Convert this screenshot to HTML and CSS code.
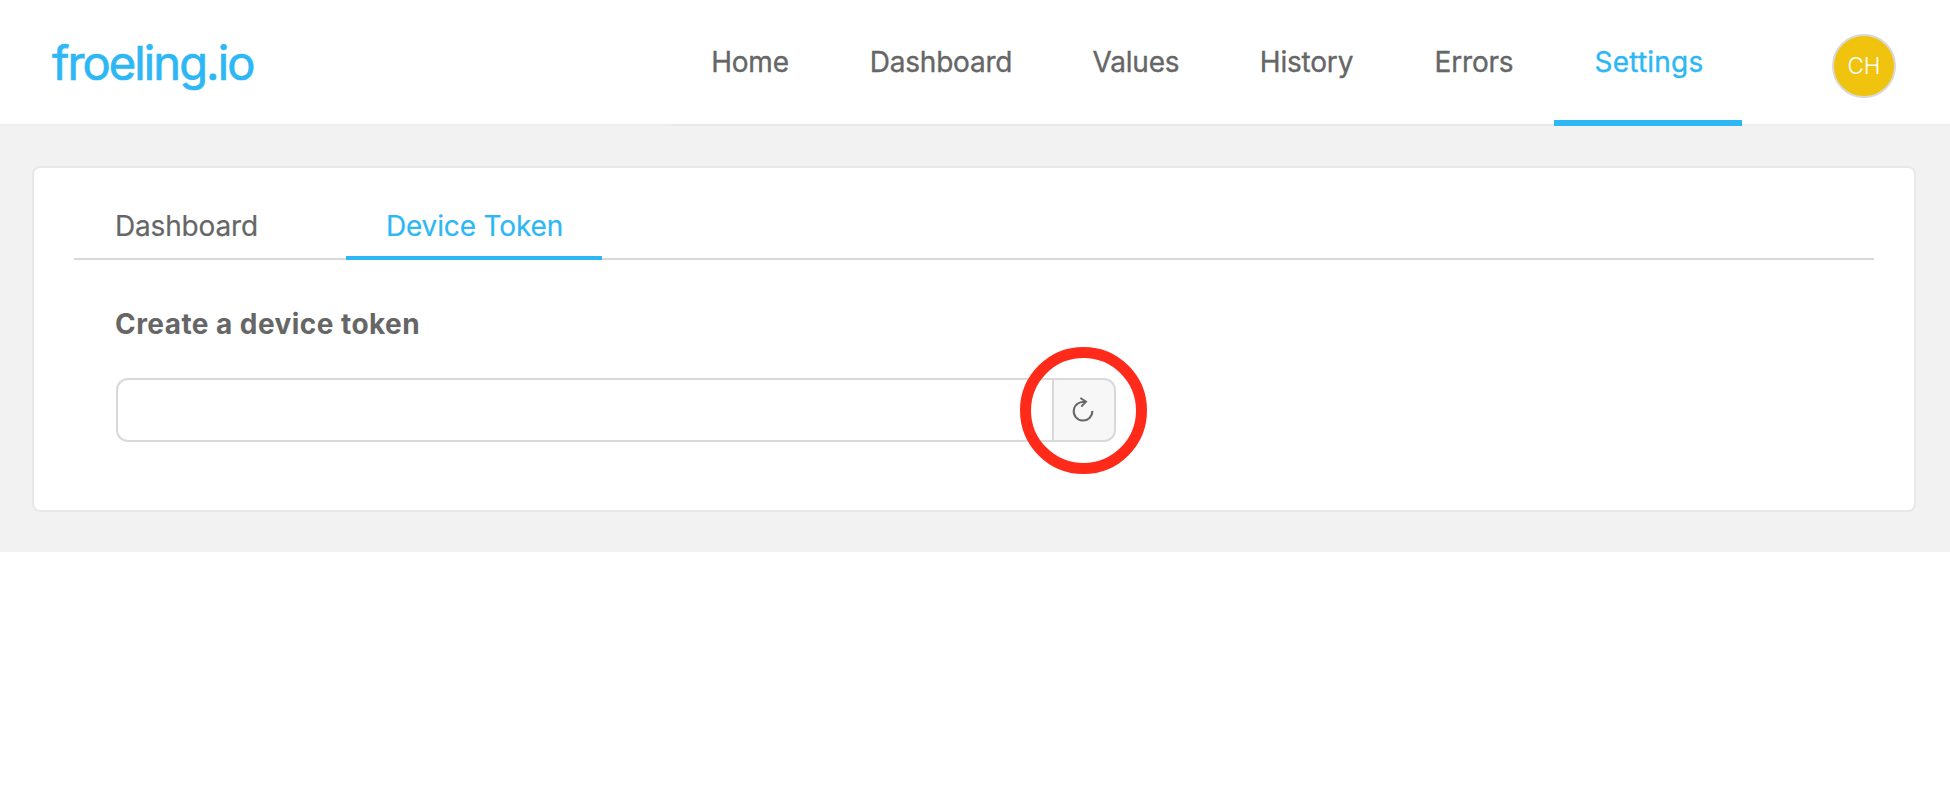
FILE: index.html
```html
<!DOCTYPE html>
<html lang="en">
<head>
<meta charset="utf-8">
<title>froeling.io</title>
<link rel="stylesheet" href="styles.css">
</head>
<body>
<header class="header">
  <a class="logo">froeling.io</a>
  <nav class="nav">
    <a class="nav-item">Home</a>
    <a class="nav-item">Dashboard</a>
    <a class="nav-item">Values</a>
    <a class="nav-item">History</a>
    <a class="nav-item">Errors</a>
    <a class="nav-item nav-active">Settings</a>
  </nav>
  <div class="avatar">CH</div>
</header>
<main class="content">
  <section class="card">
    <div class="tabs">
      <a class="tab">Dashboard</a>
      <a class="tab tab-active">Device Token</a>
    </div>
    <div class="panel">
      <h2 class="title">Create a device token</h2>
      <div class="token">
        <input class="token-input" type="text" aria-label="Device token" readonly>
        <button class="refresh" aria-label="Refresh">
          <svg width="32" height="32" viewBox="0 0 32 32" fill="none" stroke="#666" stroke-width="2"><path d="M24.3 16.9A9.3 9.3 0 1 1 17.4 8.3M12.4 4 18 7.7 13.3 12.6"/></svg>
        </button>
        <span class="marker"></span>
      </div>
    </div>
  </section>
</main>
</body>
</html>
```
FILE: styles.css
```css
* { box-sizing: border-box; }
body { margin: 0; background: #fff; color: #666; font: 400 28px/40px Inter, "Noto Sans", sans-serif; }
.header { display: flex; height: 126px; border-bottom: 2px solid #ededed; }
.logo { width: 671px; padding: 32px 0 0 52px; color: #2db7f5; font-size: 47px; line-height: 62px; letter-spacing: -1.9px; -webkit-text-stroke: 0.7px; }
.nav { display: grid; grid-template-columns: 158px 224px 166px 175px 160px 188px; height: 126px; border-bottom: 2px solid #e8e8e8; }
.nav-item { height: 126px; padding-top: 42px; text-align: center; letter-spacing: -0.2px; -webkit-text-stroke: 0.35px; }
.nav-active { padding-left: 2px; color: #2db7f5; border-bottom: 6px solid #2db7f5; letter-spacing: 0.2px; }
.avatar { width: 64px; height: 64px; margin: 34px 0 0 90px; border: 2px solid #d9d9d9; border-radius: 50%; background: #f0c30f; color: #fff; font: 300 22.5px/59px Inter, sans-serif; text-align: center; }
.content { height: 426px; padding: 40px 34px 40px 32px; background: #f2f2f2; }
.card { height: 346px; padding: 30px 40px; border: 2px solid #e8e8e8; border-radius: 8px; background: #fff; }
.tabs { display: flex; gap: 48px; height: 62px; border-bottom: 2px solid #d9d9d9; }
.tab { width: 224px; height: 62px; padding: 8px 0 0 1px; text-align: center; letter-spacing: -0.15px; -webkit-text-stroke: 0.2px; }
.tab-active { width: 256px; color: #2db7f5; border-bottom: 4px solid #2db7f5; }
.panel { padding: 44px 42px 0 41px; }
.title { margin: 0 0 34px; font-size: 28px; line-height: 40px; font-weight: 700; letter-spacing: 0.45px; }
.token { position: relative; display: flex; width: 1000px; height: 64px; margin-left: 1px; }
.token-input { flex: 1; border: 2px solid #d9d9d9; border-right: 0; border-radius: 12px 0 0 12px; outline: 0; background: #fff; }
.refresh { display: grid; place-items: center; width: 64px; padding: 0; border: 2px solid #d9d9d9; border-radius: 0 12px 12px 0; background: #f7f7f7; }
.marker { position: absolute; top: -31px; left: 904px; width: 127px; height: 127px; border: 11px solid #ff2a1a; border-radius: 50%; }
```
